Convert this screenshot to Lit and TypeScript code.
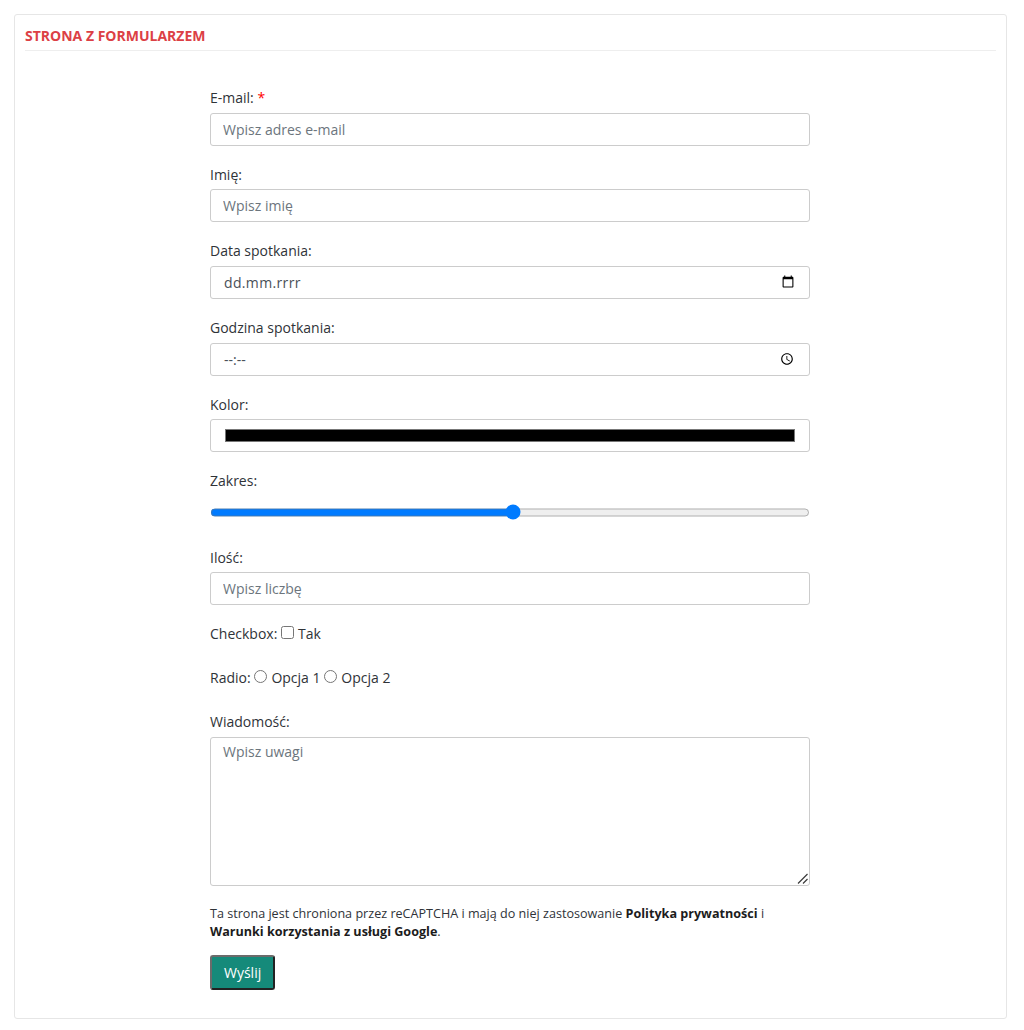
import { LitElement, html, css } from "lit";
import { customElement } from "lit/decorators.js";

@customElement("app-root")
export class AppRoot extends LitElement {
  static styles = css`
    :host { display: block; font-family: "Open Sans", sans-serif; font-size: 14px; line-height: 21px; color: #2f3338; background: #fff; height: 1030px; box-sizing: border-box; padding: 14px 17px 0 14px; }
    * { box-sizing: border-box; }
    .card { border: 1px solid #e6e6e6; border-radius: 3px; height: 1005px; padding: 10px 10px 0 10px; }
    h1 { margin: 0; font-size: 14px; line-height: 21px; font-weight: 700; color: #dc4045; text-transform: uppercase; border-bottom: 1px solid #eee; height: 26px; }
    form { width: 600px; margin: 36.15px 0 0 185px; }
    .group { margin-bottom: 18px; }
    label.top { display: block; margin-bottom: 4.6px; }
    .req { color: #f00; }
    .fc { display: block; width: 100%; height: 33px; padding: 5px 12px; border: 1px solid #ccc; border-radius: 3px; font: 14px/21px "Open Sans", sans-serif; color: #495057; background: #fff; outline: none; }
    .fc::placeholder { color: #6c757d; opacity: 1; }
    .field { position: relative; }
    .native::-webkit-datetime-edit { visibility: hidden; }
    .time::-webkit-calendar-picker-indicator { margin-right: -1px; }
    .mask { position: absolute; left: 14px; top: 6px; color: #495057; pointer-events: none; }
    .date-mask { letter-spacing: 0.35px; }
    .range-group { margin-bottom: 19px; }
    .range-group label.top { margin-bottom: 5.6px; }
    .range { display: block; width: 100%; height: 31px; padding: 0; border: 1px solid #f2f2f2; border-bottom-color: #fff; border-radius: 3px; margin: 0; accent-color: #007bff; background: #fff; }
    .inline { margin-bottom: 23px; }
    .inline input { margin: 0 0.5px 0 0; vertical-align: baseline; }
    .message { margin-bottom: 19.25px; }
    textarea.fc { height: 149px; padding-top: 3px; resize: none; }
    .grip { position: absolute; right: 2px; bottom: 2px; width: 11px; height: 11px; pointer-events: none; }
    .grip path { fill: none; stroke: #3c3c3c; stroke-width: 1.2; }
    .note { margin: 0 0 14px; font-size: 12.6px; line-height: 18px; }
    .note b { font-weight: 700; color: #1c1c1c; }
    button { height: 35px; padding: 0 12px; font: 400 14px/21px "Open Sans", sans-serif; color: #fff; background: #158a7a; border: 2px solid; border-color: #6b6b6b #222 #222 #6b6b6b; border-radius: 3px; }
  `;

  render() {
    return html`
      <div class="card" lang="pl">
        <h1>Strona z formularzem</h1>
        <form @submit=${(e: Event) => e.preventDefault()}>
          <div class="group"><label class="top">E-mail: <span class="req">*</span></label><input class="fc" type="email" placeholder="Wpisz adres e-mail" /></div>
          <div class="group"><label class="top">Imię:</label><input class="fc" type="text" placeholder="Wpisz imię" /></div>
          <div class="group"><label class="top">Data spotkania:</label><div class="field"><input class="fc native" type="date" aria-label="Data spotkania" /><span class="mask date-mask">dd.mm.rrrr</span></div></div>
          <div class="group"><label class="top">Godzina spotkania:</label><div class="field"><input class="fc native time" type="time" aria-label="Godzina spotkania" /><span class="mask">--:--</span></div></div>
          <div class="group"><label class="top">Kolor:</label><input class="fc" type="color" value="#000000" /></div>
          <div class="group range-group"><label class="top">Zakres:</label><input class="range" type="range" step="any" value="50.5" /></div>
          <div class="group"><label class="top">Ilość:</label><input class="fc" type="number" placeholder="Wpisz liczbę" /></div>
          <div class="inline">Checkbox: <label><input type="checkbox" /> Tak</label></div>
          <div class="inline">Radio: <label><input type="radio" name="r" /> Opcja 1</label> <label><input type="radio" name="r" /> Opcja 2</label></div>
          <div class="group message"><label class="top">Wiadomość:</label><div class="field"><textarea class="fc" placeholder="Wpisz uwagi"></textarea><svg class="grip" viewBox="0 0 11 11"><path d="M1 10.5 10.5 1M6 10.5 10.5 6" /></svg></div></div>
          <p class="note">Ta strona jest chroniona przez reCAPTCHA i mają do niej zastosowanie <b>Polityka prywatności</b> i <b>Warunki korzystania z usługi Google</b>.</p>
          <button type="submit">Wyślij</button>
        </form>
      </div>
    `;
  }
}
